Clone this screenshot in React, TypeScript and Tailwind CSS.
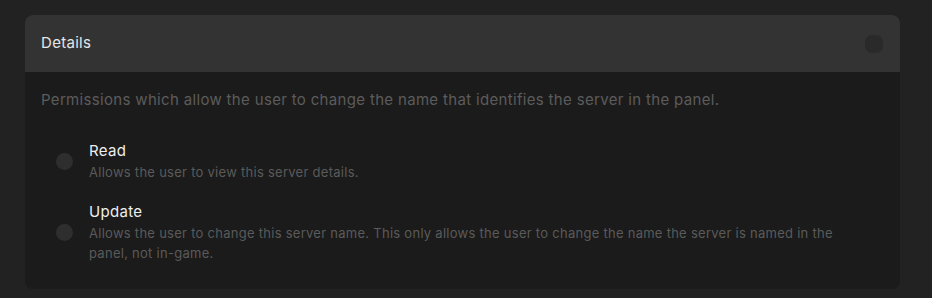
const perms = [
  { title: "Read", desc: "Allows the user to view this server details." },
  {
    title: "Update",
    desc: "Allows the user to change this server name. This only allows the user to change the name the server is named in the panel, not in-game.",
  },
];

export default function App() {
  return (
    <div className="min-h-screen bg-[#222222] pt-[15px] pl-[25px] font-['Inter',sans-serif]">
      <div className="w-[875px] rounded-lg overflow-hidden bg-[#1b1b1b]">
        <div className="h-[57px] bg-[#333333] flex items-center justify-between pl-4 pr-[17px]">
          <span className="text-[15px] tracking-[0.3px] text-[#e6e6e6]">Details</span>
          <div className="w-[18px] h-[18px] rounded-[7px] bg-[#2a2a2a]" />
        </div>
        <div className="px-4 pt-[18px] pb-[26px]">
          <p className="text-[15px] leading-5 tracking-[0.33px] text-[#5c5c5c]">
            Permissions which allow the user to change the name that identifies the server in the panel.
          </p>
          <div className="mt-[30px] flex flex-col gap-[19px] pl-[15px]">
            {perms.map((p) => (
              <div key={p.title} className="flex items-center gap-4">
                <div className="w-[17px] h-[17px] shrink-0 rounded-full bg-[#2e2e2e]" />
                <div className="max-w-[760px]">
                  <div className="text-[15px] leading-[22px] tracking-[0.3px] text-[#eeeeee]">{p.title}</div>
                  <div className="text-[13px] leading-5 tracking-[0.27px] text-[#5a5a5a]">{p.desc}</div>
                </div>
              </div>
            ))}
          </div>
        </div>
      </div>
    </div>
  );
}
